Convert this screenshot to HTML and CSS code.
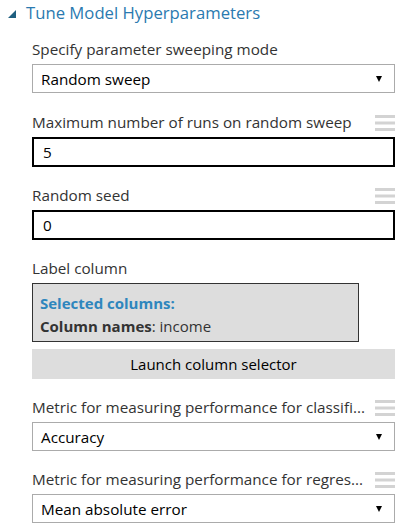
FILE: index.html
```html
<!DOCTYPE html>
<html>
<head>
<meta charset="utf-8">
<link rel="stylesheet" href="styles.css">
</head>
<body>
<div class="panel">
  <div class="header">
    <span class="caret"></span>
    <span class="title">Tune Model Hyperparameters</span>
  </div>
  <div class="content">
    <div class="field first">
      <div class="label-row"><span class="label">Specify parameter sweeping mode</span></div>
      <div class="select"><span class="value">Random sweep</span><span class="arrow"></span></div>
    </div>
    <div class="field">
      <div class="label-row"><span class="label">Maximum number of runs on random sweep</span>
        <svg class="menu" width="20" height="20" viewBox="0 0 20 20"><rect x="0" y="3" width="20" height="3"/><rect x="0" y="9.5" width="20" height="3"/><rect x="0" y="16" width="20" height="3"/></svg></div>
      <div class="input">5</div>
    </div>
    <div class="field">
      <div class="label-row"><span class="label">Random seed</span>
        <svg class="menu" width="20" height="20" viewBox="0 0 20 20"><rect x="0" y="3" width="20" height="3"/><rect x="0" y="9.5" width="20" height="3"/><rect x="0" y="16" width="20" height="3"/></svg></div>
      <div class="input">0</div>
    </div>
    <div class="field">
      <div class="label-row"><span class="label">Label column</span></div>
      <div class="columns">
        <div class="columns-title">Selected columns:</div>
        <div class="columns-names"><b>Column names</b>: income</div>
      </div>
      <div class="button">Launch column selector</div>
    </div>
    <div class="field">
      <div class="label-row"><span class="label">Metric for measuring performance for classifi...</span>
        <svg class="menu" width="20" height="20" viewBox="0 0 20 20"><rect x="0" y="3" width="20" height="3"/><rect x="0" y="9.5" width="20" height="3"/><rect x="0" y="16" width="20" height="3"/></svg></div>
      <div class="select"><span class="value">Accuracy</span><span class="arrow"></span></div>
    </div>
    <div class="field">
      <div class="label-row"><span class="label">Metric for measuring performance for regres...</span>
        <svg class="menu" width="20" height="20" viewBox="0 0 20 20"><rect x="0" y="3" width="20" height="3"/><rect x="0" y="9.5" width="20" height="3"/><rect x="0" y="16" width="20" height="3"/></svg></div>
      <div class="select"><span class="value">Mean absolute error</span><span class="arrow"></span></div>
    </div>
  </div>
</div>
</body>
</html>
```
FILE: styles.css
```css
html, body {
  margin: 0;
  padding: 0;
  background: #ffffff;
}
body {
  font-family: "Open Sans", "Liberation Sans", sans-serif;
  color: #333333;
  width: 404px;
  height: 532px;
  overflow: hidden;
}
.panel {
  padding-right: 9px;
}
.header {
  display: flex;
  align-items: center;
  height: 26px;
  padding-left: 8px;
}
.caret {
  width: 0;
  height: 0;
  border-left: 8px solid transparent;
  border-bottom: 8px solid #1f5f80;
  margin-top: 2px;
  margin-right: 10px;
}
.title {
  font-size: 16.7px;
  line-height: 26px;
  color: #2a7ab0;
  white-space: nowrap;
}
.content {
  padding-left: 32px;
  padding-top: 13px;
  display: flex;
  flex-direction: column;
  gap: 18px;
}
.field {
  display: flex;
  flex-direction: column;
}
.field.first + .field {
  margin-top: 1px;
}
.label-row {
  display: flex;
  align-items: center;
  height: 20px;
  margin-bottom: 5px;
}
.label {
  flex: 1;
  min-width: 0;
  font-size: 15.25px;
  line-height: 20px;
  white-space: nowrap;
  color: #333333;
}
.menu {
  flex: none;
  margin-left: 8px;
  fill: #d3d3d3;
}
.select {
  height: 29px;
  box-sizing: border-box;
  border: 1px solid #ababab;
  display: flex;
  align-items: center;
  padding: 0 12px 0 8px;
}
.value {
  flex: 1;
  font-size: 15.25px;
  color: #000000;
}
.arrow {
  width: 0;
  height: 0;
  border-left: 3px solid transparent;
  border-right: 3px solid transparent;
  border-top: 6px solid #000000;
}
.input {
  height: 30px;
  box-sizing: border-box;
  border: 2px solid #000000;
  padding-left: 9px;
  font-size: 15.25px;
  line-height: 26px;
  color: #000000;
}
.columns {
  width: 327px;
  height: 59px;
  box-sizing: border-box;
  border: 1px solid #333333;
  background: #dddddd;
  padding: 8px 7px 0;
  font-size: 15px;
  line-height: 23px;
}
.columns-title {
  font-weight: bold;
  color: #2e86bd;
}
.columns-names b {
  color: #333333;
}
.button {
  margin-top: 7px;
  height: 30px;
  background: #dddddd;
  text-align: center;
  font-size: 15px;
  line-height: 30px;
  color: #000000;
}
```
